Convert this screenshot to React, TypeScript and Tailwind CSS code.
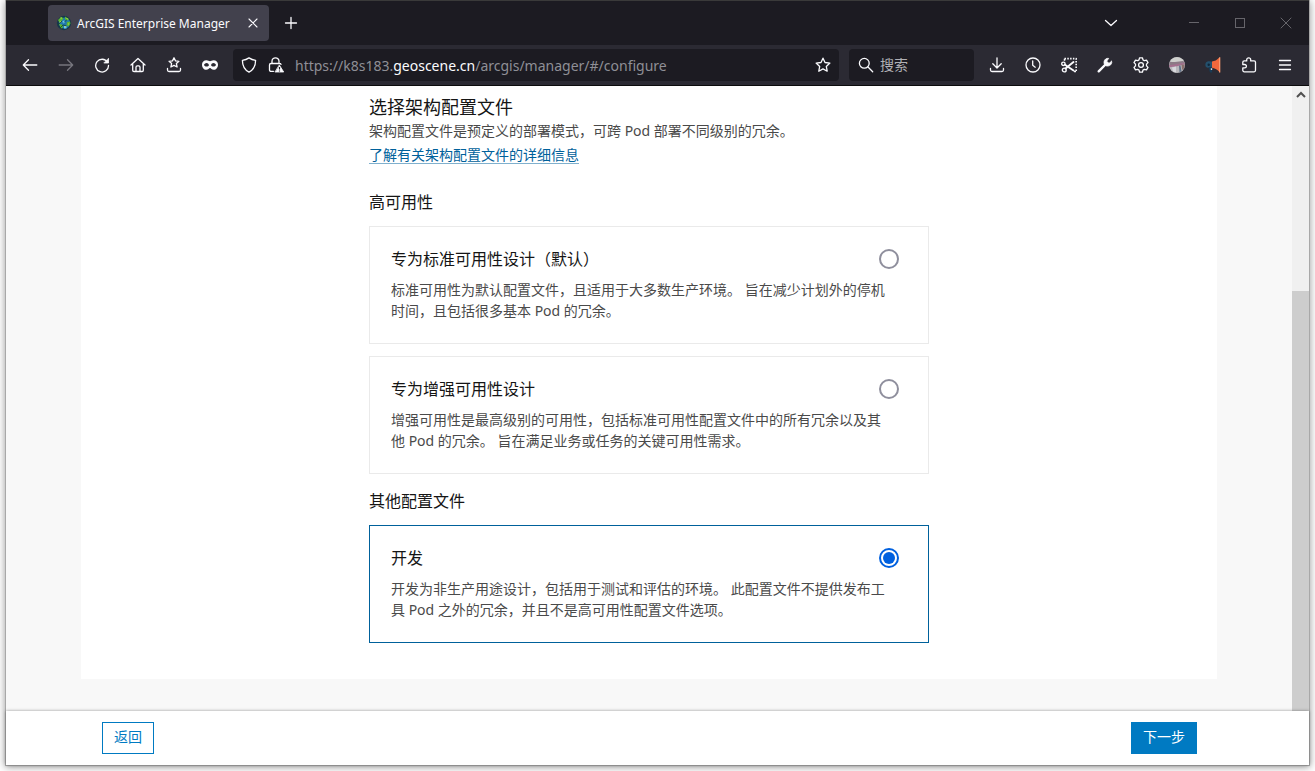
import { useState, type ReactNode } from "react";

function Icon({ children }: { children: ReactNode }) {
  return (
    <svg
      viewBox="0 0 16 16"
      className="size-4 shrink-0"
      fill="none"
      stroke="currentColor"
      strokeWidth="1.3"
      strokeLinecap="round"
      strokeLinejoin="round"
      aria-hidden="true"
    >
      {children}
    </svg>
  );
}

const STAR = "M8 1.2l2 4.3 4.9.6-3.6 3.3.9 4.8L8 11.9l-4.2 2.3.9-4.8L1.1 6.1 6 5.5z";

function ToolButton({ label, children, dim }: { label: string; children: ReactNode; dim?: boolean }) {
  return (
    <button
      type="button"
      aria-label={label}
      className={`flex h-8 w-9 shrink-0 items-center justify-center ${dim ? "text-[#77767e]" : "text-[#fbfbfe]"}`}
    >
      {children}
    </button>
  );
}

function GlobeIcon() {
  return (
    <svg viewBox="0 0 16 16" className="size-4 shrink-0" aria-hidden="true">
      <circle cx="8" cy="8" r="7.2" fill="#17384a" />
      <circle cx="8.500" cy="8" r="5.600" fill="#1f78b0" />
      <path d="M2 5l3-3 2.500 1-1 2-3 2.500zM9 1.600l4 2.400-1 1.500-3-1zM11 7l3-.5.5 2-2 3-2-1.500zM3 9l3 .5 1 3-2 1z" fill="#5cb531" />
      <path d="M6.500 6l2-.5.5 2-2 1zM8 11l2.500 0 0 2.500-2.500 0z" fill="#6cc6ee" />
      <path d="M2 10l4-4M8 7.500l3-3M7 10l4 1M4 13l3-3" stroke="#18432f" strokeWidth=".8" />
      <path d="M4.500 3l1.500 0M10.500 3.500l1.500.7M3.500 7l1.500-.5M9 12l1.500-1M12 9l1 0" stroke="#b5e05a" strokeWidth=".9" />
    </svg>
  );
}

function TitleBar() {
  return (
    <div className="flex h-11 shrink-0 items-center bg-[#1c1b22] pl-[42px] text-[#fbfbfe]">
      <div className="flex h-9 w-[221px] items-center rounded bg-[#42414d] px-2">
        <GlobeIcon />
        <span className="ml-[5px] flex-1 whitespace-nowrap pt-0.5 text-[12px]">ArcGIS Enterprise Manager</span>
        <button type="button" aria-label="关闭标签页" className="flex size-4 items-center justify-center">
          <Icon>
            <path d="M4 4l8 8M12 4l-8 8" strokeWidth="1.100" />
          </Icon>
        </button>
      </div>
      <button type="button" aria-label="新建标签页" className="ml-1 flex size-9 items-center justify-center">
        <Icon>
          <path d="M8 2.500v11M2.500 8h11" />
        </Icon>
      </button>
      <button type="button" aria-label="列出所有标签页" className="ml-auto mr-[42px] flex size-9 items-center justify-center">
        <Icon>
          <path d="M2.500 5.500L8 10.500l5.500-5" />
        </Icon>
      </button>
      <div className="flex text-[#66656b]">
        <button type="button" aria-label="最小化" className="flex h-11 w-[46px] items-center justify-center">
          <Icon>
            <path d="M3 7.500h10" strokeWidth="1" strokeLinecap="butt" />
          </Icon>
        </button>
        <button type="button" aria-label="最大化" className="flex h-11 w-[46px] items-center justify-center">
          <Icon>
            <rect x="3.500" y="3.500" width="9" height="9" strokeWidth="1" strokeLinejoin="miter" />
          </Icon>
        </button>
        <button type="button" aria-label="关闭" className="flex h-11 w-[46px] items-center justify-center">
          <Icon>
            <path d="M3 3l10 10M13 3L3 13" strokeWidth="1" />
          </Icon>
        </button>
      </div>
    </div>
  );
}

function NavBar() {
  return (
    <div className="flex h-10 shrink-0 items-center bg-[#2b2a33] px-1.5">
      <ToolButton label="后退">
        <Icon>
          <path d="M14.800 8H1.500M6.500 2.800L1.300 8l5.200 5.200" />
        </Icon>
      </ToolButton>
      <ToolButton label="前进" dim>
        <Icon>
          <path d="M1.200 8h13.300M9.500 2.800L14.700 8l-5.200 5.200" />
        </Icon>
      </ToolButton>
      <ToolButton label="重新载入">
        <Icon>
          <path d="M13.500 5.200A6.400 6.400 0 1 0 14.500 8.500" />
          <path d="M14.500 1.700v4.300h-4.300z" fill="currentColor" strokeWidth=".8" />
        </Icon>
      </ToolButton>
      <ToolButton label="主页">
        <Icon>
          <path d="M1 8l7-6.500L15 8M2.700 7v6.200c0 .8.500 1.300 1.300 1.300h8c.8 0 1.300-.5 1.300-1.300V7" />
          <path d="M6 14.300v-4c0-1 .5-1.500 1.300-1.500h1.400c.8 0 1.300.5 1.300 1.500v4" />
        </Icon>
      </ToolButton>
      <ToolButton label="书签">
        <Icon>
          <path d="M8 .8l1.500 3.100 3.400.4-2.500 2.300.7 3.400L8 8.400 4.900 10l.7-3.400L3.100 4.300l3.400-.4z" />
          <path d="M1.500 11.500v1.500c0 .9.600 1.500 1.500 1.500h10c.9 0 1.500-.6 1.500-1.500v-1.500" />
        </Icon>
      </ToolButton>
      <ToolButton label="隐私浏览">
        <Icon>
          <path
            fillRule="evenodd"
            fill="currentColor"
            stroke="none"
            d="M4.500 3.200C6 3.200 7 4.200 8 4.200s2-1 3.500-1c2.700 0 4.500 1.600 4.500 4.300 0 3.200-1.800 5.300-4.300 5.300C9.700 12.800 9 11 8 11s-1.700 1.800-3.700 1.800C1.800 12.800 0 10.700 0 7.500c0-2.700 1.800-4.300 4.500-4.300zM4.500 6C3.200 6 2.300 7 2 8c.6 1 1.500 1.600 2.600 1.600S6.500 9 7 8.200C6.600 6.900 5.700 6 4.500 6zm7 0c-1.200 0-2.100.9-2.500 2.200.5.8 1.300 1.400 2.400 1.400s2-.6 2.600-1.600c-.3-1-1.200-2-2.500-2z"
          />
        </Icon>
      </ToolButton>

      <div className="ml-[5px] flex h-8 min-w-0 flex-1 items-center rounded bg-[#1c1b22] pl-2 text-[#fbfbfe]">
        <Icon>
          <path d="M8 .9c2.200 1.500 4 2.100 6.600 2.400 0 5.700-1.800 9.400-6.600 11.900C3.200 12.700 1.400 9 1.400 3.300 4 3 5.800 2.400 8 .9z" />
        </Icon>
        <span className="ml-[11px]">
          <Icon>
            <path d="M4 6.500V4.300a3.500 3.500 0 0 1 7 0v2.200M5.500 14.300H3c-.9 0-1.500-.5-1.500-1.400V8c0-.9.600-1.500 1.500-1.500h8.500c.8 0 1.300.3 1.500.9" />
            <path d="M11.500 8.300L15.700 15H7.300z" fill="currentColor" strokeWidth=".8" />
            <path d="M11.500 10v2.500M11.500 13.400v1" stroke="#1c1b22" strokeWidth="1.200" strokeLinecap="butt" />
          </Icon>
        </span>
        <span className="ml-[11px] flex-1 truncate text-[14px] text-[#8f8f96]">
          https://k8s183.<span className="text-[#fbfbfe]">geoscene.cn</span>/arcgis/manager/#/configure
        </span>
        <button type="button" aria-label="添加书签" className="flex size-8 items-center justify-center">
          <Icon>
            <path d={STAR} />
          </Icon>
        </button>
      </div>

      <div className="ml-[10px] flex h-8 w-[125px] items-center rounded bg-[#1c1b22] pl-[9px] text-[#fbfbfe]">
        <Icon>
          <circle cx="6.300" cy="6.300" r="4.900" />
          <path d="M10 10l4.700 4.700" />
        </Icon>
        <input
          type="text"
          aria-label="搜索"
          placeholder="搜索"
          className="ml-[6px] w-20 bg-transparent pb-0.5 text-[14px] outline-none placeholder:text-[#b0b0b5]"
        />
      </div>

      <div className="ml-[5px] flex">
        <ToolButton label="下载">
          <Icon>
            <path d="M8 .8v10M3.800 6.800L8 11l4.200-4.200M1.500 11.500v1.500c0 .9.600 1.500 1.500 1.500h10c.9 0 1.500-.6 1.500-1.500v-1.500" />
          </Icon>
        </ToolButton>
        <ToolButton label="历史">
          <Icon>
            <circle cx="8" cy="8" r="7" />
            <path d="M7.700 4v4.300l2.500 1.900" />
          </Icon>
        </ToolButton>
        <ToolButton label="截图">
          <Icon>
            <path d="M3.500 1.700H15.200V14" strokeDasharray="1.500 1.300" strokeWidth="1.700" strokeLinecap="butt" />
            <path d="M3.500 1.700v2M15 14.500h-2" strokeWidth="1.500" strokeLinecap="butt" />
            <circle cx="2.400" cy="6.800" r="1.700" strokeWidth="1.400" />
            <circle cx="3.300" cy="13" r="1.900" strokeWidth="1.400" />
            <path d="M4 7.800l8.500 5.700M4.500 11.600L12.500 5" strokeWidth="1.900" />
          </Icon>
        </ToolButton>
        <ToolButton label="开发者工具">
          <Icon>
            <path d="M1.700 14.300L8 8" strokeWidth="2.400" />
            <path
              d="M14.500 4.300L12 6.300 9.700 4.200l2-2.800C9.500.8 7.300 2.500 7 4.700c-.1 1 0 1.800.3 2.500l1.600 1.600c2.700 1 5.900-.8 5.900-3.600 0-.3-.1-.6-.3-.9z"
              fill="currentColor"
              strokeWidth=".7"
            />
          </Icon>
        </ToolButton>
        <ToolButton label="设置">
          <Icon>
            <path d="M6.600.8h2.800l.6 2.100 1.300.8 2.200-.5 1.500 2.400L13.500 7.100v1.800l1.500 1.500-1.500 2.400-2.200-.5-1.300.8-.6 2.100H6.600L6 13.100l-1.300-.8-2.200.5L1 10.400l1.500-1.500V7.100L1 5.600l1.500-2.400 2.200.5L6 2.900z" />
            <circle cx="8" cy="8" r="2.400" />
          </Icon>
        </ToolButton>
        <ToolButton label="帐户">
          <svg viewBox="0 0 16 16" className="size-4" aria-hidden="true">
            <circle cx="8" cy="8" r="8" fill="#b9b8bc" />
            <path d="M1.200 4A8 8 0 0 1 14.800 4L12 5 4 5.500z" fill="#cfd0cd" />
            <path d="M.8 5l5 0 8.500-1 1.300 2.500L9 8 .2 9z" fill="#8c7a86" />
            <path d="M0 8.200l7-1 8.500-1.400.3 1.400L8 9.200l-7.700 1z" fill="#a4708f" />
            <path d="M10 8.500l1.500 0 1 5.500-2 1.500z" fill="#5f6f84" />
            <path d="M12.500 7.500l3.200 0-.7 4-2 1.500z" fill="#8a6f6c" />
            <path d="M3 10.500l4-1v6l-3-1z" fill="#d7d7dc" />
          </svg>
        </ToolButton>
        <ToolButton label="公告">
          <svg viewBox="0 0 16 16" className="size-4" aria-hidden="true">
            <path d="M.7 6C1.300 4 5 4 7.500 4.800v5.600C5 11 1.300 11.200.7 9.500c-.4-1-.4-2.500 0-3.500z" fill="#24506c" />
            <path d="M3.500 10h3l.8 5.500H5z" fill="#183b55" />
            <circle cx="3.700" cy="7.700" r="1.200" fill="#0f263a" />
            <path d="M7 4.500C9.500 4.200 12 3.200 14 .8v13.700c-2-2.200-4.500-3.400-7-3.700z" fill="#f2683c" />
            <path d="M14 .2h1.300v15.400H14z" fill="#fa9a70" />
            <path d="M5.800 11.300h1.400v1.600H5.800z" fill="#e8edf0" />
          </svg>
        </ToolButton>
        <ToolButton label="扩展">
          <Icon>
            <path d="M5.700 3.900V2.800a2 2 0 0 1 4 0v1.100h3.400c.9 0 1.400.5 1.400 1.400v8c0 .9-.5 1.500-1.400 1.500H3.300c-.9 0-1.500-.6-1.500-1.500v-2.400h1.900a1.700 1.700 0 0 0 0-3.400H1.800V5.300c0-.9.600-1.400 1.500-1.400z" />
          </Icon>
        </ToolButton>
        <ToolButton label="菜单">
          <Icon>
            <path d="M2.500 3.500h11M2.500 8h11M2.500 12.500h11" />
          </Icon>
        </ToolButton>
      </div>
    </div>
  );
}

type Profile = { id: string; title: string; text: string };

const AVAILABILITY: Profile[] = [
  {
    id: "standard",
    title: "专为标准可用性设计（默认）",
    text: "标准可用性为默认配置文件，且适用于大多数生产环境。 旨在减少计划外的停机时间，且包括很多基本 Pod 的冗余。",
  },
  {
    id: "enhanced",
    title: "专为增强可用性设计",
    text: "增强可用性是最高级别的可用性，包括标准可用性配置文件中的所有冗余以及其他 Pod 的冗余。 旨在满足业务或任务的关键可用性需求。",
  },
];

const OTHER: Profile[] = [
  {
    id: "development",
    title: "开发",
    text: "开发为非生产用途设计，包括用于测试和评估的环境。 此配置文件不提供发布工具 Pod 之外的冗余，并且不是高可用性配置文件选项。",
  },
];

function ProfileCard({ profile, checked, onSelect }: { profile: Profile; checked: boolean; onSelect: () => void }) {
  return (
    <label
      htmlFor={profile.id}
      className={`block border pt-5 pr-[29px] pb-[22px] pl-[21px] ${checked ? "border-[#00619b]" : "border-[#eaeaea]"}`}
    >
      <span className="flex items-center justify-between text-[16px] leading-6 text-[#151515]">
        {profile.title}
        <input
          id={profile.id}
          type="radio"
          name="profile"
          checked={checked}
          onChange={onSelect}
          className="size-5 shrink-0 appearance-none rounded-full border-2 border-[#8f8f9d] bg-white bg-clip-content p-0.5 checked:border-[#0060df] checked:bg-[#0060df]"
        />
      </span>
      <span className="mt-2 block pr-2 text-[14px] leading-[21px] text-[#4a4a4a]">{profile.text}</span>
    </label>
  );
}

export default function App() {
  const [selected, setSelected] = useState("development");

  return (
    <div className="flex h-screen overflow-hidden bg-white px-[5px] pb-[5px] font-['Noto_Sans','Noto_Sans_CJK_SC',sans-serif]">
      <div className="flex min-w-0 flex-1 flex-col border-x border-b border-[#a8a8a8] shadow-[0_1px_8px_rgba(0,0,0,0.4)]">
        <div className="flex shrink-0 flex-col border-t border-t-[#3a3a3a] border-b border-b-[#0c0c0d]">
          <TitleBar />
          <NavBar />
        </div>

        <div className="flex min-h-0 flex-1 bg-[#f8f8f8]">
          <main className="min-w-0 flex-1 overflow-hidden px-[75px]">
            <div className="bg-white pt-[9px] pb-9">
              <form className="mx-auto max-w-[560px]">
                <h1 className="text-[18px] leading-6 text-[#151515]">选择架构配置文件</h1>
                <p className="text-[14px] leading-6 text-[#4a4a4a]">
                  架构配置文件是预定义的部署模式，可跨 Pod 部署不同级别的冗余。
                </p>
                <p className="text-[14px] leading-6">
                  <a
                    href="#profiles"
                    className="text-[#00619b] underline decoration-[#80b0cd] decoration-1 underline-offset-3"
                  >
                    了解有关架构配置文件的详细信息
                  </a>
                </p>
                <h2 className="mt-[23px] mb-3 text-[16px] leading-6 text-[#151515]">高可用性</h2>
                <div className="flex flex-col gap-3">
                  {AVAILABILITY.map((p) => (
                    <ProfileCard key={p.id} profile={p} checked={selected === p.id} onSelect={() => setSelected(p.id)} />
                  ))}
                </div>
                <h2 className="mt-[15px] mb-3 text-[16px] leading-6 text-[#151515]">其他配置文件</h2>
                {OTHER.map((p) => (
                  <ProfileCard key={p.id} profile={p} checked={selected === p.id} onSelect={() => setSelected(p.id)} />
                ))}
              </form>
            </div>
          </main>
          <div className="flex w-[17px] shrink-0 flex-col bg-[#f0f0f0]" aria-hidden="true">
            <div className="flex h-[17px] items-center justify-center text-[#505050]">
              <Icon>
                <path d="M4 10L8 6l4 4" strokeWidth="2" strokeLinecap="butt" strokeLinejoin="miter" />
              </Icon>
            </div>
            <div className="mt-[188px] flex-1 bg-[#cdcdcd]" />
          </div>
        </div>

        <footer className="z-10 flex shrink-0 justify-between bg-white py-[11px] pr-28 pl-24 text-[14px] shadow-[0_0_3px_rgba(0,0,0,0.4)]">
          <button type="button" className="h-8 border border-[#007ac2] bg-white px-[11px] pb-[3px] text-[#007ac2]">
            返回
          </button>
          <button type="button" className="h-8 border border-[#007ac2] bg-[#007ac2] px-[11px] pb-[3px] text-white">
            下一步
          </button>
        </footer>
      </div>
    </div>
  );
}
